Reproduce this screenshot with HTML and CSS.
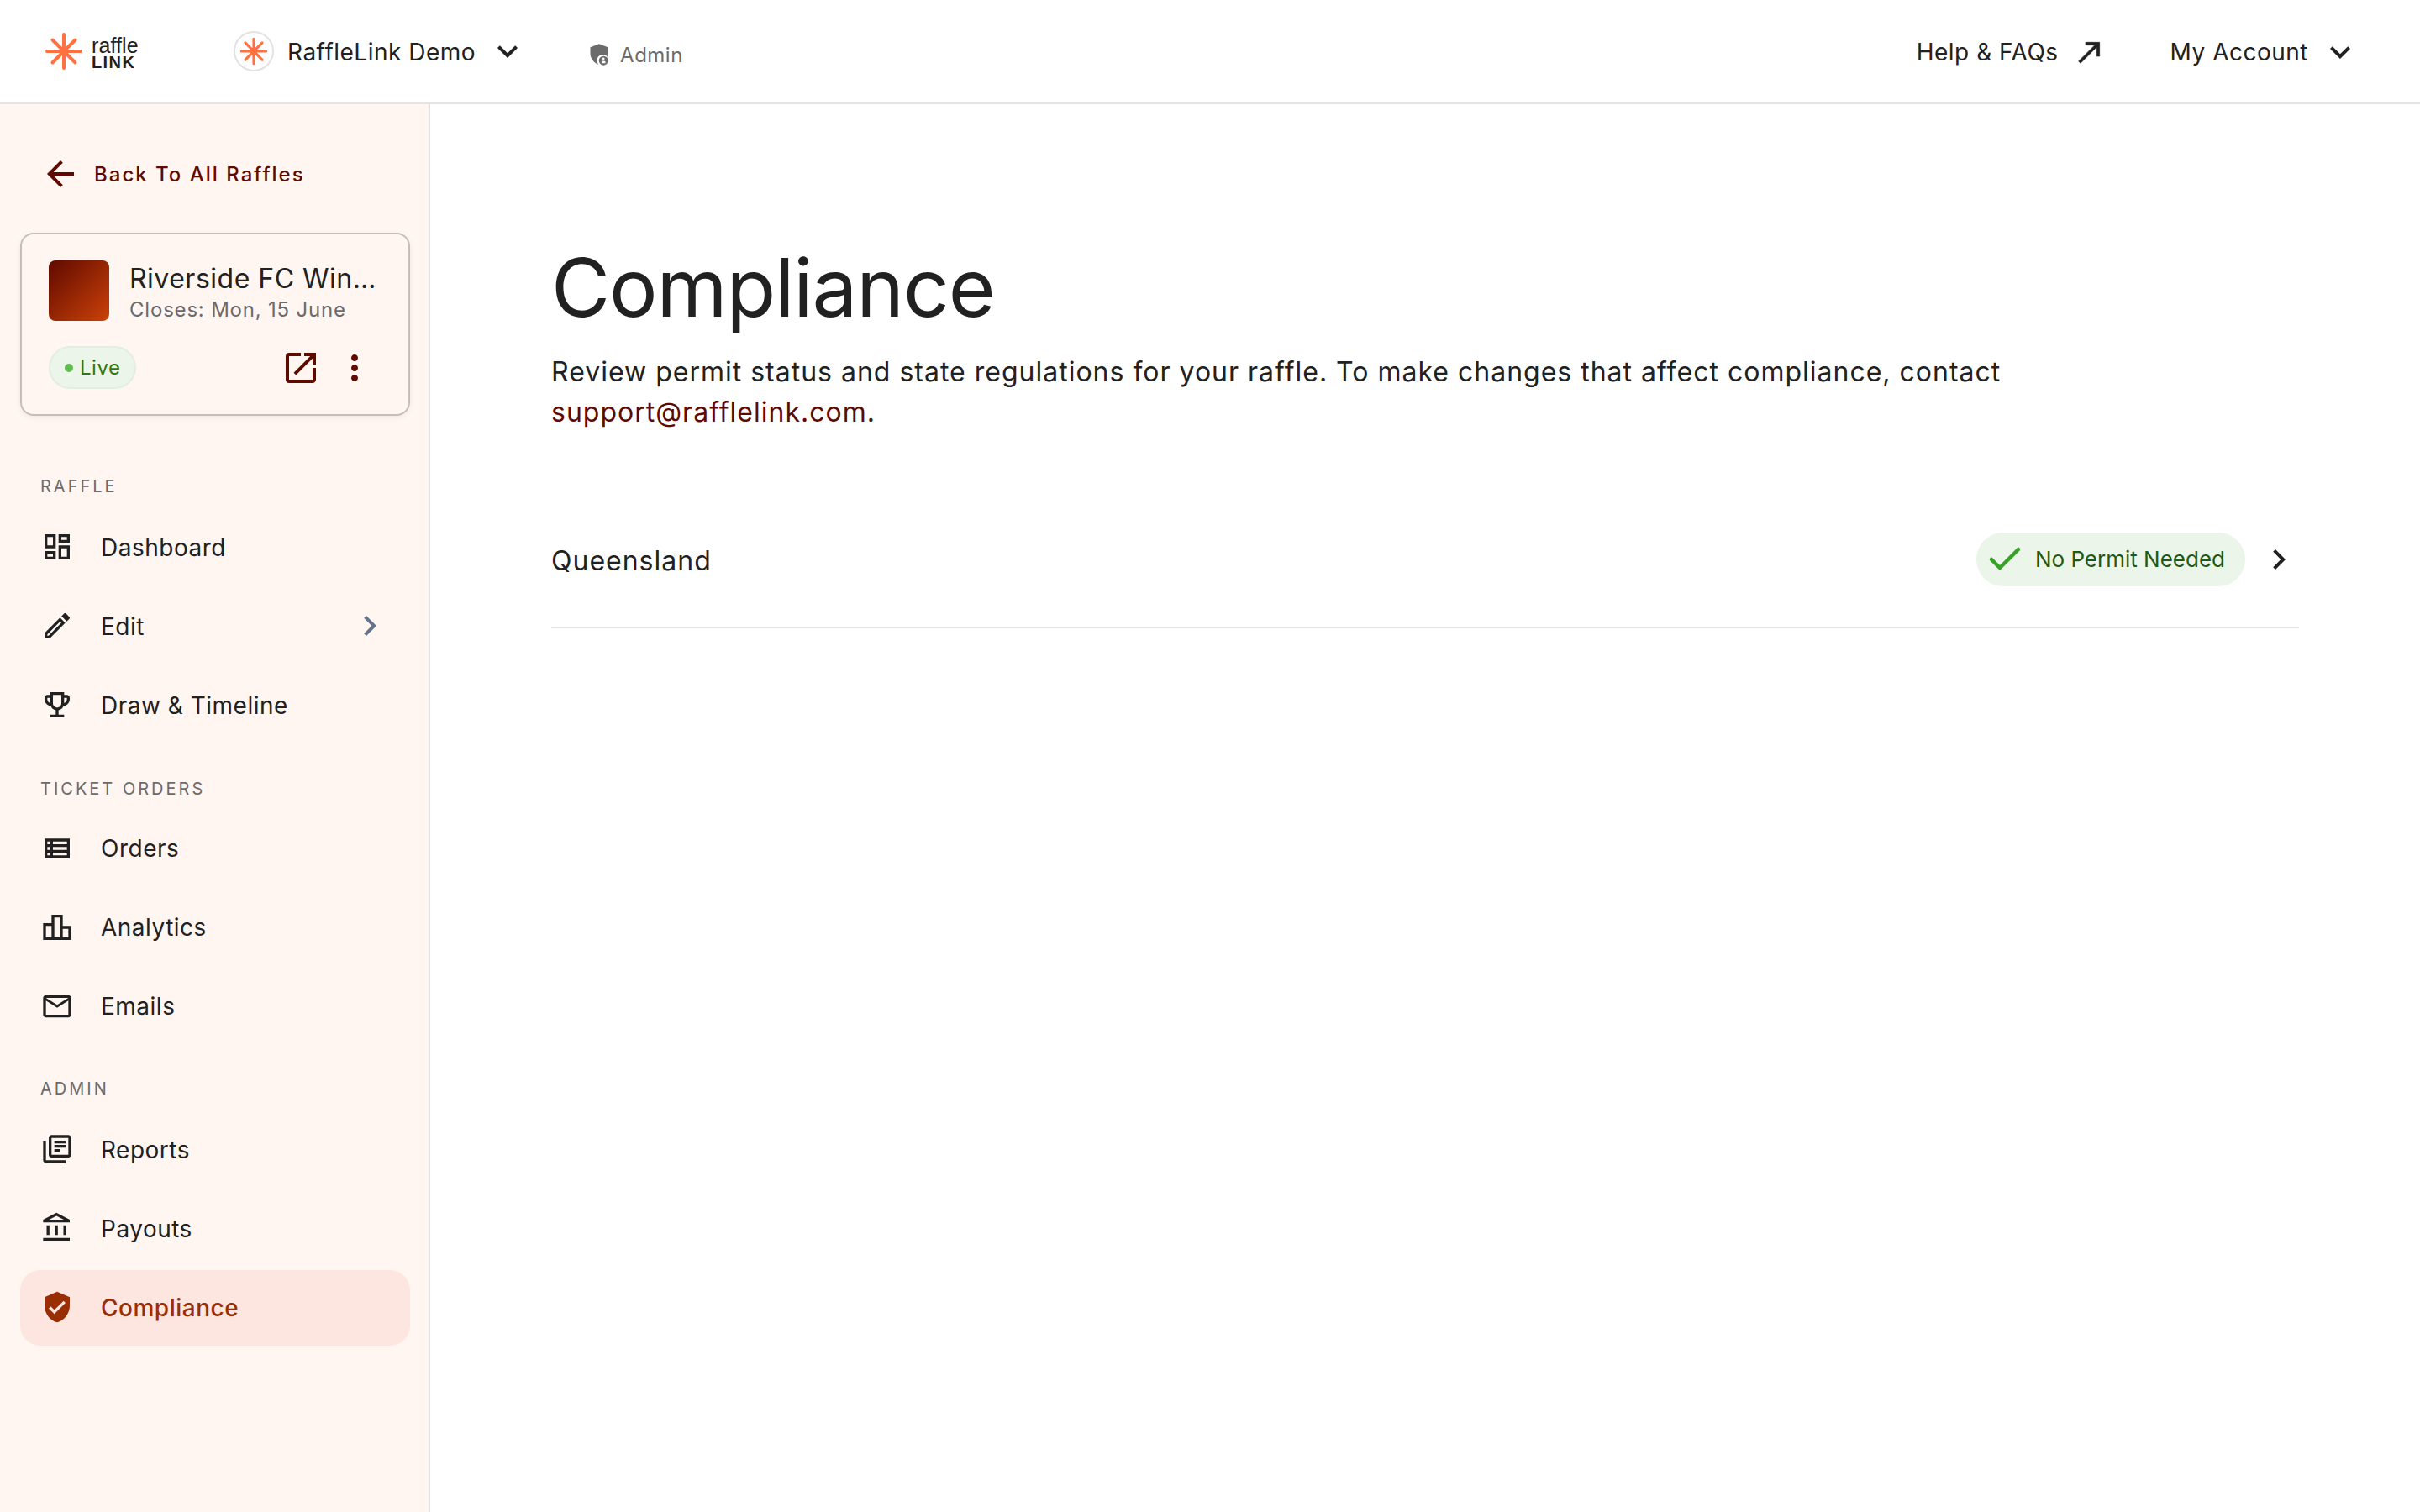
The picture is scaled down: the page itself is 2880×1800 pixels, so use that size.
FILE: index.html
```html
<!DOCTYPE html>
<html lang="en">
<head>
  <meta charset="UTF-8">
  <title>Compliance - RaffleLink</title>
  <link rel="stylesheet" href="styles.css">
</head>
<body>
  <header class="topbar">
    <div class="logo">
      <svg class="logo-mark" viewBox="0 0 44 44"><path d="M22 2v40M2 22h40M8.5 8.5l27 27M35.5 8.5l-27 27"/></svg>
      <div class="logo-text"><span class="logo-top">raffle</span><span class="logo-bottom">LINK</span></div>
    </div>
    <div class="org">
      <span class="org-avatar"><svg viewBox="0 0 44 44"><path d="M22 3v38M3 22h38M9 9l26 26M35 9L9 35"/></svg></span>
      <span class="org-name">RaffleLink Demo</span>
      <svg class="icon-48" viewBox="0 0 24 24"><path d="M16.59 8.59L12 13.17 7.41 8.59 6 10l6 6 6-6z"/></svg>
    </div>
    <div class="role">
      <svg viewBox="0 0 24 24"><path d="M12 1L3 4.6v6.2c0 5 3.4 9.8 8.4 11.2-1-1-1.6-2.4-1.6-3.9 0-3.3 2.700-6 6-6 1.900 0 3.700.9 4.800 2.400.2-1.100.4-2.200.4-3.300V4.600L12 1z"/><path fill-rule="evenodd" d="M16.500 13.500a4.700 4.700 0 1 0 0 9.400 4.700 4.700 0 0 0 0-9.400zm0 1.600a1.100 1.100 0 1 1 0 2.200 1.100 1.100 0 0 1 0-2.200zm-2 5.600v-1.100c0-.8 1.300-1.200 2-1.200s2 .4 2 1.200v1.100h-4z"/></svg>
      <span>Admin</span>
    </div>
    <div class="topbar-right">
      <a class="top-link">Help &amp; FAQs
        <svg class="icon-40 arrow-out" viewBox="0 0 24 24"><path d="M9 5v2h6.590L4 18.590 5.410 20 17 8.410V15h2V5z"/></svg>
      </a>
      <a class="top-link account">My Account
        <svg class="icon-48" viewBox="0 0 24 24"><path d="M16.59 8.59L12 13.17 7.41 8.59 6 10l6 6 6-6z"/></svg>
      </a>
    </div>
  </header>

  <div class="layout">
    <aside class="sidebar">
      <a class="back-link">
        <svg class="icon-48" viewBox="0 0 24 24"><path d="M20 11H7.830l5.590-5.590L12 4l-8 8 8 8 1.410-1.410L7.830 13H20v-2z"/></svg>
        <span>Back To All Raffles</span>
      </a>

      <div class="raffle-card">
        <div class="raffle-head">
          <div class="raffle-thumb"></div>
          <div class="raffle-info">
            <div class="raffle-title">Riverside FC Winter Raffle</div>
            <div class="raffle-closes">Closes: Mon, 15 June</div>
          </div>
        </div>
        <div class="raffle-foot">
          <span class="live-pill"><i class="live-dot"></i>Live</span>
          <div class="raffle-actions">
            <svg class="icon-48" viewBox="0 0 24 24"><path d="M19 19H5V5h7V3H5c-1.110 0-2 .9-2 2v14c0 1.100.89 2 2 2h14c1.100 0 2-.9 2-2v-7h-2v7zM14 3v2h3.590l-9.830 9.830 1.410 1.410L19 6.410V10h2V3h-7z"/></svg>
            <svg class="icon-48" viewBox="0 0 24 24"><path d="M12 8c1.100 0 2-.9 2-2s-.9-2-2-2-2 .9-2 2 .9 2 2 2zm0 2c-1.100 0-2 .9-2 2s.9 2 2 2 2-.9 2-2-.9-2-2-2zm0 6c-1.100 0-2 .9-2 2s.9 2 2 2 2-.9 2-2-.9-2-2-2z"/></svg>
          </div>
        </div>
      </div>

      <nav class="nav-section first">
        <div class="nav-label">RAFFLE</div>
        <a class="nav-item">
          <svg class="icon-40" viewBox="0 0 24 24"><path d="M19 5v2h-4V5h4M9 5v6H5V5h4m10 8v6h-4v-6h4M9 17v2H5v-2h4M21 3h-8v6h8V3zM11 3H3v10h8V3zm10 8h-8v10h8V11zm-10 4H3v6h8v-6z"/></svg>
          <span>Dashboard</span>
        </a>
        <a class="nav-item">
          <svg class="icon-40" viewBox="0 0 24 24"><path d="M14.060 9.020l.92.92L5.920 19H5v-.92l9.060-9.060M17.660 3c-.25 0-.51.1-.7.29l-1.830 1.830 3.750 3.750 1.830-1.830c.39-.39.39-1.020 0-1.410l-2.340-2.340c-.2-.2-.45-.29-.71-.29zm-3.600 3.190L3 17.250V21h3.750L17.810 9.940l-3.750-3.750z"/></svg>
          <span>Edit</span>
          <svg class="icon-48 nav-chevron" viewBox="0 0 24 24"><path d="M10 6L8.590 7.410 13.170 12l-4.580 4.590L10 18l6-6z"/></svg>
        </a>
        <a class="nav-item">
          <svg class="icon-40" viewBox="0 0 24 24"><path d="M19 5h-2V3H7v2H5c-1.100 0-2 .9-2 2v1c0 2.550 1.920 4.630 4.390 4.940.63 1.500 1.980 2.630 3.610 2.960V19H7v2h10v-2h-4v-3.100c1.630-.33 2.980-1.460 3.610-2.960C19.080 12.630 21 10.550 21 8V7c0-1.100-.9-2-2-2zM5 8V7h2v3.820C5.840 10.400 5 9.300 5 8zm7 6c-1.650 0-3-1.350-3-3V5h6v6c0 1.650-1.350 3-3 3zm7-6c0 1.300-.84 2.400-2 2.820V7h2v1z"/></svg>
          <span>Draw &amp; Timeline</span>
        </a>
      </nav>

      <nav class="nav-section orders">
        <div class="nav-label">TICKET ORDERS</div>
        <a class="nav-item">
          <svg class="icon-40" viewBox="0 0 24 24"><path d="M3 5v14h18V5H3zm4 12H5v-2h2v2zm0-4H5v-2h2v2zm0-4H5V7h2v2zm12 8H9v-2h10v2zm0-4H9v-2h10v2zm0-4H9V7h10v2z"/></svg>
          <span>Orders</span>
        </a>
        <a class="nav-item">
          <svg class="icon-40" viewBox="0 0 24 24"><path d="M16 11V3H8v6H2v12h20V11h-6zm-6-6h4v14h-4V5zm-6 6h4v8H4v-8zm16 8h-4v-6h4v6z"/></svg>
          <span>Analytics</span>
        </a>
        <a class="nav-item">
          <svg class="icon-40" viewBox="0 0 24 24"><path d="M22 6c0-1.100-.9-2-2-2H4c-1.100 0-2 .9-2 2v12c0 1.100.9 2 2 2h16c1.100 0 2-.9 2-2V6zm-2 0l-8 5-8-5h16zm0 12H4V8l8 5 8-5v10z"/></svg>
          <span>Emails</span>
        </a>
      </nav>

      <nav class="nav-section">
        <div class="nav-label">ADMIN</div>
        <a class="nav-item">
          <svg class="icon-40" viewBox="0 0 24 24"><path d="M4 6H2v14c0 1.100.9 2 2 2h14v-2H4V6zm16-4H8c-1.100 0-2 .9-2 2v12c0 1.100.9 2 2 2h12c1.100 0 2-.9 2-2V4c0-1.100-.9-2-2-2zm0 14H8V4h12v12zM10 9h8v2h-8zm0 3h4v2h-4zm0-6h8v2h-8z"/></svg>
          <span>Reports</span>
        </a>
        <a class="nav-item">
          <svg class="icon-40" viewBox="0 0 24 24"><path d="M6.500 10h-2v7h2v-7zm6 0h-2v7h2v-7zm8.500 9H2v2h19v-2zm-2.500-9h-2v7h2v-7zm-7-6.740L16.710 6H6.290l5.210-2.740m0-2.260L2 6v2h19V6l-9.500-5z"/></svg>
          <span>Payouts</span>
        </a>
        <a class="nav-item active">
          <svg class="icon-40" viewBox="0 0 24 24"><path d="M12 1L3 5v6c0 5.550 3.840 10.740 9 12 5.160-1.260 9-6.450 9-12V5l-9-4zm-2 16l-4-4 1.410-1.410L10 14.170l6.590-6.590L18 9l-8 8z"/></svg>
          <span>Compliance</span>
        </a>
      </nav>
    </aside>

    <main class="content">
      <h1>Compliance</h1>
      <p class="intro">Review permit status and state regulations for your raffle. To make changes that affect compliance, contact <a href="#">support@rafflelink.com</a>.</p>

      <div class="state-row">
        <span class="state-name">Queensland</span>
        <span class="permit-pill">
          <svg viewBox="0 0 40 30"><path d="M4 16l10 10L36 4"/></svg>
          No Permit Needed
        </span>
        <svg class="icon-48" viewBox="0 0 24 24"><path d="M10 6L8.590 7.410 13.170 12l-4.580 4.590L10 18l6-6z"/></svg>
      </div>
    </main>
  </div>
</body>
</html>
```
FILE: styles.css
```css
* {
  box-sizing: border-box;
}

html, body {
  height: 100%;
}

body {
  margin: 0;
  display: flex;
  flex-direction: column;
  background-color: #fff;
  color: #212121;
  font-family: Inter, 'Noto Sans', sans-serif;
}

a {
  color: inherit;
  text-decoration: none;
}

svg {
  fill: currentColor;
  flex-shrink: 0;
  display: block;
}

.icon-40 {
  width: 40px;
  height: 40px;
}

.icon-48 {
  width: 48px;
  height: 48px;
}

/* top bar */
.topbar {
  height: 124px;
  flex-shrink: 0;
  display: flex;
  align-items: center;
  padding-left: 54px;
  padding-right: 71px;
  border-bottom: 2px solid #e4e4e4;
}

.logo {
  display: flex;
  align-items: center;
  gap: 11px;
  width: 224px;
}

.logo-mark {
  width: 44px;
  height: 44px;
  fill: none;
  stroke: #ff7140;
  stroke-width: 4;
  stroke-linecap: round;
}

.logo-text {
  display: flex;
  flex-direction: column;
  padding-top: 5px;
  font-family: 'Liberation Sans', sans-serif;
  line-height: 20px;
}

.logo-top {
  font-size: 25px;
  letter-spacing: 0.1px;
}

.logo-bottom {
  font-size: 20px;
  font-weight: 700;
  letter-spacing: 1.4px;
}

.org {
  display: flex;
  align-items: center;
  gap: 16px;
}

.org-avatar {
  width: 48px;
  height: 48px;
  border: 2px solid #e2e2e2;
  border-radius: 50%;
  display: flex;
  align-items: center;
  justify-content: center;
}

.org-avatar svg {
  width: 34px;
  height: 34px;
  fill: none;
  stroke: #ff7140;
  stroke-width: 4;
  stroke-linecap: round;
}

.org-name {
  margin-top: 1px;
  margin-right: -2px;
  font-size: 28px;
  letter-spacing: 0.5px;
}

.role {
  display: flex;
  align-items: center;
  gap: 11px;
  margin-left: 71px;
  margin-top: 8px;
  font-size: 24px;
  letter-spacing: 0.5px;
  color: #6b6b6b;
}

.role svg {
  width: 28px;
  height: 28px;
}

.topbar-right {
  margin-left: auto;
  display: flex;
  align-items: center;
}

.top-link {
  display: flex;
  align-items: center;
  gap: 17px;
  margin-top: 1px;
  font-size: 28px;
  letter-spacing: 0.5px;
}

.top-link.account {
  gap: 14px;
  margin-left: 76px;
}

.arrow-out path {
  stroke: currentColor;
  stroke-width: 0.4;
}

/* sidebar */
.layout {
  flex: 1;
  display: flex;
  min-height: 0;
}

.sidebar {
  width: 512px;
  flex-shrink: 0;
  padding: 59px 22px 0 24px;
  background-color: #fff5f1;
  border-right: 2px solid #e4e2e2;
}

.back-link {
  display: flex;
  align-items: center;
  gap: 16px;
  padding-left: 24px;
  color: #5f0a00;
  font-size: 24px;
  font-weight: 500;
  letter-spacing: 2px;
}

.raffle-card {
  margin-top: 46px;
  height: 218px;
  padding: 31px 32px 30px;
  border: 2px solid #c8bcb9;
  border-radius: 16px;
  box-shadow: 0 2px 6px rgba(0, 0, 0, 0.06);
}

.raffle-head {
  display: flex;
  align-items: flex-start;
  gap: 24px;
}

.raffle-thumb {
  width: 72px;
  height: 72px;
  flex-shrink: 0;
  border-radius: 8px;
  background: linear-gradient(135deg, #5f0a00, #cc4108);
}

.raffle-info {
  min-width: 0;
  flex: 1;
  height: 72px;
  padding-top: 2px;
}

.raffle-title {
  font-size: 32px;
  line-height: 40px;
  letter-spacing: 0.5px;
  white-space: nowrap;
  overflow: hidden;
  text-overflow: ellipsis;
}

.raffle-closes {
  margin-top: 1px;
  font-size: 24px;
  line-height: 32px;
  letter-spacing: 0.8px;
  color: #6b6b6b;
}

.raffle-foot {
  margin-top: 30px;
  display: flex;
  align-items: center;
  justify-content: space-between;
}

.live-pill {
  height: 51px;
  padding: 0 17px;
  display: flex;
  align-items: center;
  gap: 8px;
  font-size: 24px;
  letter-spacing: 0.5px;
  color: #2d7a14;
  background-color: #ecf5ea;
  border: 2px solid #e2efe0;
  border-radius: 26px;
}

.live-dot {
  width: 10px;
  height: 10px;
  border-radius: 50%;
  background-color: #5fbd4c;
}

.raffle-actions {
  display: flex;
  gap: 16px;
  margin-right: 8px;
  color: #5f0a00;
}

.nav-section {
  margin-top: 37px;
}

.nav-section.first {
  margin-top: 68px;
}

.nav-section.orders {
  margin-top: 38px;
}

.nav-label {
  height: 32px;
  line-height: 32px;
  margin-bottom: 12px;
  padding-left: 24px;
  font-size: 20px;
  letter-spacing: 3px;
  color: #6b6b6b;
}

.nav-section.orders .nav-label {
  margin-bottom: 10px;
}

.nav-item {
  height: 90px;
  margin-bottom: 4px;
  padding-left: 24px;
  display: flex;
  align-items: center;
  gap: 32px;
  font-size: 28px;
  letter-spacing: 0.5px;
  border-radius: 24px;
}

.nav-item svg {
  margin-bottom: 3px;
}

.nav-section.orders .nav-item svg {
  margin-bottom: 0;
}

.nav-chevron {
  margin-left: auto;
  margin-right: 24px;
  color: #64748b;
}

.nav-item.active {
  background-color: #fde5e0;
  color: #992e04;
  font-weight: 500;
}

/* page content */
.content {
  flex: 1;
  padding: 162px 144px 0;
}

h1 {
  margin: 0 0 21px;
  font-size: 96px;
  line-height: 112px;
  font-weight: 400;
  letter-spacing: -1.1px;
}

.intro {
  margin: 0;
  max-width: 1800px;
  font-size: 32px;
  line-height: 48px;
  letter-spacing: 1px;
}

.intro a {
  color: #5f0a00;
}

.state-row {
  margin-top: 71px;
  padding: 48px 0;
  display: flex;
  align-items: center;
  gap: 16px;
  border-bottom: 2px solid #e4e4e4;
}

.state-name {
  flex: 1;
  margin-top: 2px;
  font-size: 32px;
  letter-spacing: 1px;
}

.permit-pill {
  height: 64px;
  padding: 0 24px 2px 14px;
  display: flex;
  align-items: center;
  gap: 16px;
  font-size: 26px;
  color: #1f5a14;
  background-color: #ebf5e9;
  border-radius: 32px;
}

.permit-pill svg {
  width: 40px;
  height: 30px;
  fill: none;
  stroke: #35a226;
  stroke-width: 4.5;
  stroke-linecap: round;
  stroke-linejoin: round;
}
```
